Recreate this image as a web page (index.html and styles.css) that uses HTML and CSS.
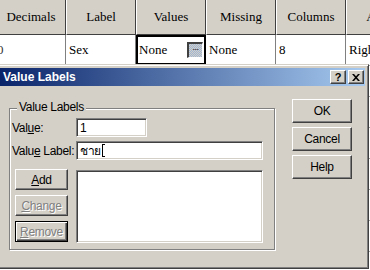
FILE: index.html
```html
<!DOCTYPE html>
<html>
<head>
<meta charset="utf-8">
<link rel="stylesheet" href="styles.css">
</head>
<body>
<div class="grid">
  <div class="row">
    <div class="hc">Decimals</div>
    <div class="hc">Label</div>
    <div class="hc">Values</div>
    <div class="hc">Missing</div>
    <div class="hc">Columns</div>
    <div class="hc">Align</div>
  </div>
  <div class="row">
    <div class="dc first">0</div>
    <div class="dc">Sex</div>
    <div class="dc sel"><span>None</span><span class="ell">...</span></div>
    <div class="dc">None</div>
    <div class="dc">8</div>
    <div class="dc">Right</div>
  </div>
  <div class="row"><div class="dc"></div><div class="dc"></div><div class="dc"></div><div class="dc"></div><div class="dc"></div><div class="dc"></div></div>
  <div class="row"><div class="dc"></div><div class="dc"></div><div class="dc"></div><div class="dc"></div><div class="dc"></div><div class="dc"></div></div>
  <div class="row"><div class="dc"></div><div class="dc"></div><div class="dc"></div><div class="dc"></div><div class="dc"></div><div class="dc"></div></div>
  <div class="row"><div class="dc"></div><div class="dc"></div><div class="dc"></div><div class="dc"></div><div class="dc"></div><div class="dc"></div></div>
  <div class="row"><div class="dc"></div><div class="dc"></div><div class="dc"></div><div class="dc"></div><div class="dc"></div><div class="dc"></div></div>
  <div class="row"><div class="dc"></div><div class="dc"></div><div class="dc"></div><div class="dc"></div><div class="dc"></div><div class="dc"></div></div>
</div>

<div class="dialog">
  <div class="title">
    <span>Value Labels</span>
    <div class="tbtns">
      <div class="tbtn q">?</div>
      <div class="tbtn">
        <svg width="8" height="7" viewBox="0 0 8 7"><path d="M0 0h2l2 2.2L6 0h2L5 3.5 8 7H6L4 4.8 2 7H0l3-3.5z" fill="#000"/></svg>
      </div>
    </div>
  </div>
  <div class="body">
    <div class="group">
      <span class="legend">Value Labels</span>
      <div class="frow">
        <span class="lbl">Val<u>u</u>e:</span>
        <div class="field f1">1</div>
      </div>
      <div class="frow r2">
        <span class="lbl">Valu<u>e</u> Label:</span>
        <div class="field f2">ชาย<span class="caret"></span></div>
      </div>
      <div class="r3">
        <div class="lbtns">
          <div class="btn"><span><u>A</u>dd</span></div>
          <div class="btn dis"><span><u>C</u>hange</span></div>
          <div class="btn dis def"><span><u>R</u>emove</span></div>
        </div>
        <div class="list"></div>
      </div>
    </div>
    <div class="rbtns">
      <div class="btn rb">OK</div>
      <div class="btn rb">Cancel</div>
      <div class="btn rb">Help</div>
    </div>
  </div>
</div>
</body>
</html>
```
FILE: styles.css
```css
* { box-sizing: border-box; }
html, body { margin: 0; padding: 0; }
body {
  width: 370px;
  height: 270px;
  overflow: hidden;
  position: relative;
  background: #fff;
  font-family: "Liberation Sans", "DejaVu Sans", sans-serif;
  color: #000;
}
.grid { margin-left: -4px; width: 460px; }
.row { display: flex; }
.hc {
  flex: none;
  width: 70px;
  height: 35px;
  background: #d4d0c8;
  border-left: 1px solid #fff;
  border-right: 1px solid #404040;
  border-bottom: 1px solid #404040;
  display: flex;
  align-items: center;
  justify-content: center;
  font: 13px "Liberation Serif", serif;
}
.dc {
  flex: none;
  width: 70px;
  height: 31px;
  border-right: 1px solid #808080;
  border-bottom: 1px solid #a0a0a0;
  display: flex;
  align-items: center;
  padding-left: 3px;
  font: 13px "Liberation Serif", serif;
  white-space: nowrap;
  overflow: hidden;
}
.dc.first { padding-left: 1px; color: #333; }
.dc.sel {
  border-right: 0;
  box-shadow: inset 0 0 0 2px #000;
  justify-content: space-between;
  padding-right: 3px;
}
.ell {
  width: 16px;
  height: 16px;
  border-top: 2px solid #404040;
  border-left: 2px solid #404040;
  border-bottom: 1px solid #fff;
  border-right: 1px solid #fff;
  background: repeating-conic-gradient(#d4d0c8 0 25%, #9db4d4 0 50%) 0 0 / 2px 2px;
  font: 9px "Liberation Sans", sans-serif;
  line-height: 6px;
  text-align: center;
  letter-spacing: -0.5px;
}

.dialog {
  position: absolute;
  left: -4px;
  top: 64px;
  width: 373px;
  height: 205px;
  background: #d4d0c8;
  border: 1px solid;
  border-color: #d4d0c8 #404040 #404040 #d4d0c8;
  box-shadow: inset 1px 1px #fff, inset -1px -1px #808080;
  padding: 3px;
}
.title {
  height: 18px;
  display: flex;
  align-items: center;
  padding: 0 1px 0 3px;
  background: linear-gradient(90deg, #0a246a, #a6caf0);
  color: #fff;
  font: bold 12px "Liberation Sans", sans-serif;
}
.tbtns { margin-left: auto; display: flex; gap: 2px; }
.tbtn {
  width: 16px;
  height: 14px;
  background: #d4d0c8;
  border: 1px solid;
  border-color: #fff #404040 #404040 #fff;
  box-shadow: inset -1px -1px #808080;
  display: flex;
  align-items: center;
  justify-content: center;
  color: #000;
}
.tbtn.q { font: bold 11px "Liberation Sans", sans-serif; line-height: 12px; }

.body { display: flex; padding-left: 9px; font-size: 12px; letter-spacing: -0.3px; }
.group {
  position: relative;
  margin-top: 22px;
  width: 266px;
  height: 142px;
  border: 1px solid #808080;
  box-shadow: inset 1px 1px #fff, 1px 1px #fff;
  padding: 9px 0 0 2px;
}
.legend {
  position: absolute;
  top: -8px;
  left: 7px;
  padding: 0 2px;
  line-height: 13px;
  background: #d4d0c8;
}
.frow { display: flex; align-items: center; }
.r2 { margin-top: 4px; }
.lbl { width: 64px; flex: none; white-space: nowrap; }
.field, .list {
  background: #fff;
  border: 1px solid;
  border-color: #808080 #fff #fff #808080;
  box-shadow: inset 1px 1px #404040, inset -1px -1px #d4d0c8;
}
.field {
  height: 19px;
  padding-left: 3px;
  display: flex;
  align-items: center;
  font-family: "Liberation Sans", "Noto Sans", "DejaVu Sans", sans-serif;
}
.f1 { width: 71px; }
.f2 { width: 187px; }
.caret {
  width: 3px;
  height: 13px;
  margin-left: 1px;
  border-left: 1px solid #000;
  border-top: 1px solid #000;
  border-bottom: 1px solid #000;
}
.r3 { display: flex; margin-top: 9px; }
.lbtns { margin-left: 3px; display: flex; flex-direction: column; gap: 5px; }
.btn {
  width: 53px;
  height: 21px;
  background: #d4d0c8;
  border: 1px solid;
  border-color: #fff #404040 #404040 #fff;
  box-shadow: inset -1px -1px #808080;
  display: flex;
  align-items: center;
  justify-content: center;
  white-space: nowrap;
}
.btn.dis { color: #808080; text-shadow: 1px 1px 0 #fff; }
.btn.def {
  border-color: #000;
  box-shadow: inset 1px 1px #fff, inset -1px -1px #404040, inset -2px -2px #808080;
}
.list { margin-left: 8px; margin-top: 1px; width: 187px; height: 73px; }
.rbtns { margin-left: 17px; margin-top: 13px; display: flex; flex-direction: column; gap: 4px; }
.btn.rb { width: 60px; height: 24px; }
```
